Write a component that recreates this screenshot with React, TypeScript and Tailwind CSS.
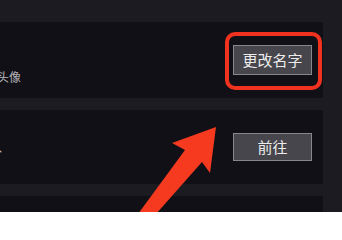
export default function App() {
  return (
    <div
      className="relative h-[212px] w-[342px] overflow-hidden bg-[#1c1b21]"
      style={{ fontFamily: '"Noto Sans CJK SC", "Noto Sans", sans-serif' }}
    >
      <div className="h-[22px]" />
      <div className="mr-[19px] flex flex-col gap-[12px]">
        <div className="flex h-[76px] items-center justify-between bg-[#111016] pr-[11px]">
          <div className="ml-[-3px] self-end pb-[13px] text-[12px] leading-[16px] text-[#b4b3b8]">头像</div>
          <button className="flex h-[30px] w-[79px] items-center justify-center border border-[#86868b] bg-[#46464c] text-[15px] text-[#ececec]">
            更改名字
          </button>
        </div>
        <div className="flex h-[74px] items-center justify-between bg-[#111016] pr-[11px]">
          <div className="ml-[-10px] text-[12px] leading-[16px] text-[#c4c3c8]">入</div>
          <button className="flex h-[28px] w-[79px] items-center justify-center border border-[#86868b] bg-[#46464c] text-[15px] text-[#ececec]">
            前往
          </button>
        </div>
        <div className="h-[40px] bg-[#111016]" />
      </div>

      <div className="absolute left-[225px] top-[32px] h-[58px] w-[97px] rounded-[10px] border-[4px] border-[#f0321e]" />

      <svg className="absolute left-0 top-0" width="342" height="212" viewBox="0 0 342 212">
        <polygon
          points="216,127 172,143 185,150 138,214 156,214 202,162 210,173"
          fill="#f53a1f"
        />
      </svg>
    </div>
  );
}
